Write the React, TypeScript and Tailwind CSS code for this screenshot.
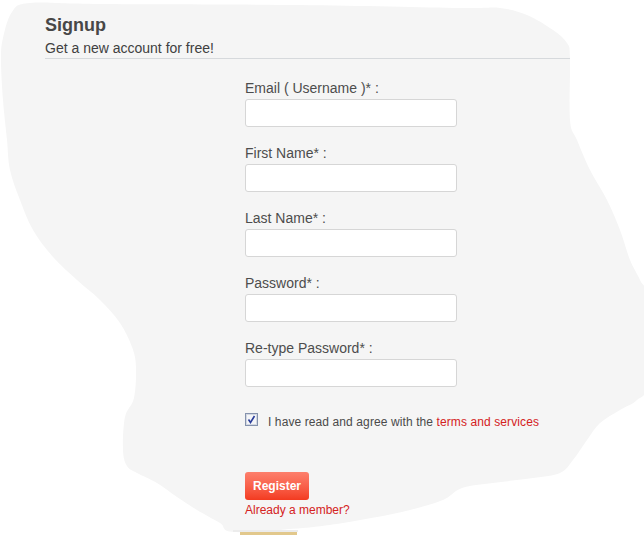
import React from "react";

// outline of the paper blob behind the form
const BLOB: [number, number][] = [
  [30, 3], [100, 4], [300, 5], [460, 8], [500, 8], [527, 15], [553, 30], [567, 43],
  [570, 58], [570, 120], [577, 140], [590, 170], [607, 200], [620, 230], [630, 260],
  [640, 280], [647, 300], [647, 383], [637, 400], [620, 410], [600, 423], [587, 440],
  [573, 460], [560, 473], [533, 478], [493, 483], [462, 488], [443, 500], [410, 510],
  [377, 517], [343, 523], [303, 528], [234, 532], [220, 523], [197, 510], [177, 497],
  [157, 483], [137, 473], [127, 466], [123, 450], [125, 417], [134, 398], [136, 367],
  [132, 347], [120, 323], [100, 300], [77, 280], [53, 257], [33, 230], [20, 200],
  [10, 170], [7, 140], [3, 100], [1, 60], [3, 38], [12, 12],
];

function smoothPath(pts: [number, number][]) {
  const n = pts.length;
  let d = `M${pts[0][0]},${pts[0][1]}`;
  for (let i = 0; i < n; i++) {
    const p0 = pts[(i - 1 + n) % n];
    const p1 = pts[i];
    const p2 = pts[(i + 1) % n];
    const p3 = pts[(i + 2) % n];
    const c1x = p1[0] + (p2[0] - p0[0]) / 6;
    const c1y = p1[1] + (p2[1] - p0[1]) / 6;
    const c2x = p2[0] - (p3[0] - p1[0]) / 6;
    const c2y = p2[1] - (p3[1] - p1[1]) / 6;
    d += ` C${c1x},${c1y} ${c2x},${c2y} ${p2[0]},${p2[1]}`;
  }
  return d + " Z";
}

function Backdrop() {
  return (
    <svg className="absolute inset-0" width="644" height="535" viewBox="0 0 644 535">
      <path d={smoothPath(BLOB)} fill="#f5f5f5" />
      <rect x="233" y="530" width="65" height="2" fill="#ececec" />
      <rect x="240" y="532" width="57" height="3" fill="#e2c88c" />
    </svg>
  );
}

function Field({ label, type = "text" }: { label: string; type?: string }) {
  return (
    <div className="flex flex-col">
      <label className="text-[14px] leading-[20px] text-[#4d4d4d]">{label}</label>
      <input
        type={type}
        className="mt-px h-[28px] w-[212px] rounded-[3px] border border-[#d6d6d6] bg-white px-2 text-[13px] outline-none"
      />
    </div>
  );
}

function CheckIcon() {
  return (
    <svg width="13" height="13" viewBox="0 0 13 13" className="shrink-0">
      <rect x="0.5" y="0.5" width="12" height="12" fill="#e9ecf2" stroke="#8592ad" />
      <rect x="1.5" y="1.5" width="10" height="10" fill="#f4f5f8" stroke="#d3d8e2" />
      <path d="M3.5 6.5 L5.5 9.5 L9.5 3" fill="none" stroke="#2a3d9a" strokeWidth="1.6" />
    </svg>
  );
}

export default function App() {
  return (
    <div className="relative h-[535px] w-[644px] overflow-hidden bg-white font-['Liberation_Sans',Arial,sans-serif]">
      <Backdrop />

      <div className="relative pl-[45px] pt-[13px]">
        <div className="w-[525px] border-b border-[#d6d9dc]">
          <h1 className="text-[18px] font-bold leading-[24px] text-[#474747]">Signup</h1>
          <p className="mt-px text-[14px] leading-[20px] text-[#404040]">Get a new account for free!</p>
        </div>

        <form className="ml-[200px] flex flex-col pt-[19px]">
          <div className="flex flex-col gap-[16px]">
            <Field label="Email ( Username )* :" />
            <Field label="First Name* :" />
            <Field label="Last Name* :" />
            <Field label="Password* :" type="password" />
            <Field label="Re-type Password* :" type="password" />
          </div>

          <div className="mt-[26px] flex items-start gap-[10px]">
            <CheckIcon />
            <span className="mt-px text-[12px] leading-[16px] tracking-[0.1px] text-[#4a4a4a]">
              I have read and agree with the <a className="text-[#d42222]">terms and services</a>
            </span>
          </div>

          <button
            type="button"
            className="mt-[42px] h-[28px] w-[64px] rounded-[3px] bg-gradient-to-b from-[#fd7f6c] to-[#f33a1f] text-[12px] font-bold text-white"
          >
            Register
          </button>
          <a className="mt-[2px] text-[12px] leading-[16px] text-[#d42222]">Already a member?</a>
        </form>
      </div>
    </div>
  );
}
